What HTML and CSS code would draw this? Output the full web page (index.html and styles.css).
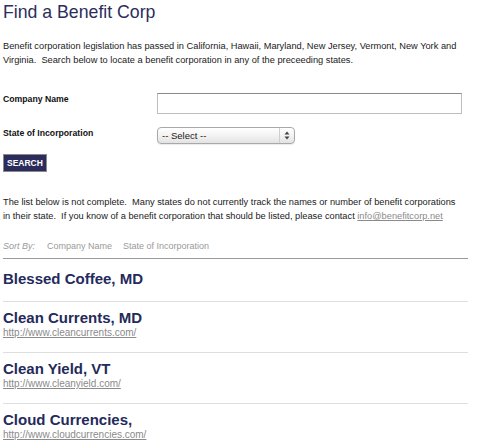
FILE: index.html
```html
<!DOCTYPE html>
<html>
<head>
<meta charset="utf-8">
<link rel="stylesheet" href="styles.css">
</head>
<body>
<div class="page">
  <h1 class="title">Find a Benefit Corp</h1>
  <p class="intro">Benefit corporation legislation has passed in California, Hawaii, Maryland, New Jersey, Vermont, New York and Virginia.&nbsp; Search below to locate a benefit corporation in any of the preceeding states.</p>

  <form class="search-form">
    <div class="form-row row-name">
      <label class="form-label">Company Name</label>
      <input class="text-input" type="text">
    </div>
    <div class="form-row row-state">
      <label class="form-label">State of Incorporation</label>
      <div class="select-box">
        <span class="select-text">-- Select --</span>
        <span class="select-arrows">
          <svg width="6" height="9" viewBox="0 0 6 9"><path d="M3 0.5 L5.5 3.5 L0.5 3.5 Z" fill="#444"/><path d="M3 8.5 L5.5 5.5 L0.5 5.5 Z" fill="#444"/></svg>
        </span>
      </div>
    </div>
    <button class="search-btn" type="button">SEARCH</button>
  </form>

  <p class="notice">The list below is not complete.&nbsp; Many states do not currently track the names or number of benefit corporations in their state.&nbsp; If you know of a benefit corporation that should be listed, please contact <a class="mail-link" href="#">info@benefitcorp.net</a></p>

  <div class="sort-bar">
    <span class="sort-label">Sort By:</span>
    <span class="sort-opt">Company Name</span>
    <span class="sort-opt">State of Incorporation</span>
  </div>

  <ul class="corp-list">
    <li class="corp">
      <h2 class="corp-name">Blessed Coffee, MD</h2>
    </li>
    <li class="corp">
      <h2 class="corp-name">Clean Currents, MD</h2>
      <a class="corp-url" href="#">http://www.cleancurrents.com/</a>
    </li>
    <li class="corp">
      <h2 class="corp-name">Clean Yield, VT</h2>
      <a class="corp-url" href="#">http://www.cleanyield.com/</a>
    </li>
    <li class="corp">
      <h2 class="corp-name">Cloud Currencies,</h2>
      <a class="corp-url" href="#">http://www.cloudcurrencies.com/</a>
    </li>
  </ul>
</div>
</body>
</html>
```

FILE: styles.css
```css
html, body {
  margin: 0;
  padding: 0;
  background: #fff;
}

body {
  font-family: "Liberation Sans", Arial, Helvetica, sans-serif;
  color: #1a1a1a;
}

.page {
  width: 465px;
  padding: 0 0 0 3px;
}

.title {
  margin: 0;
  padding-top: 1px;
  font-size: 17.7px;
  line-height: 22px;
  font-weight: normal;
  color: #2b2d5c;
}

.intro {
  margin: 16px 0 0;
  font-size: 9.25px;
  line-height: 14px;
  color: #1a1a1a;
}

.search-form {
  margin: 26px 0 0;
}

.form-row {
  display: flex;
  align-items: flex-start;
}

.form-label {
  width: 154px;
  flex: none;
  font-size: 8.7px;
  line-height: 14px;
  font-weight: bold;
  color: #111;
}

.row-name .form-label {
  margin-top: -1px;
}

.text-input {
  box-sizing: border-box;
  width: 305px;
  height: 21px;
  margin: 0;
  padding: 0;
  border: 1px solid #bdbdbd;
  border-top-color: #8a8a8a;
  background: #fff;
  outline: none;
}

.row-state {
  margin-top: 12px;
}

.select-box {
  box-sizing: border-box;
  width: 138px;
  height: 17px;
  margin-top: 1px;
  display: flex;
  align-items: center;
  border: 1px solid #a9a9a9;
  border-radius: 4px;
  background: linear-gradient(#ffffff, #f4f4f4 45%, #e3e3e3);
  box-shadow: 0 1px 1px rgba(0,0,0,0.08);
}

.select-text {
  flex: 1;
  padding-left: 4px;
  font-size: 9.5px;
  line-height: 15px;
  color: #222;
}

.select-arrows {
  width: 14px;
  height: 15px;
  display: flex;
  align-items: center;
  justify-content: center;
  border-left: 1px solid #cfcfcf;
}

.search-btn {
  display: block;
  margin: 10px 0 0;
  box-sizing: border-box;
  height: 18px;
  padding: 0 3px;
  border: 1px solid #8a8a8a;
  background: #2b2c5b;
  color: #fff;
  font-family: "Liberation Sans", Arial, Helvetica, sans-serif;
  font-size: 8.5px;
  font-weight: bold;
  line-height: 16px;
}

.notice {
  margin: 23px 0 0;
  max-width: 458px;
  font-size: 9.25px;
  line-height: 14px;
  color: #1a1a1a;
}

.mail-link {
  color: #8a8a8a;
  text-decoration: underline;
}

.sort-bar {
  margin-top: 16px;
  padding-bottom: 5px;
  border-bottom: 1px solid #9a9a9a;
  display: flex;
  gap: 11px;
  font-size: 9px;
  line-height: 14px;
  color: #9a9a9a;
}

.sort-label {
  font-style: italic;
  margin-right: 1px;
}

.corp-list {
  list-style: none;
  margin: 4px 0 0;
  padding: 0;
}

.corp {
  padding: 7px 0 13px;
  border-bottom: 1px solid #dedede;
}

.corp-name {
  margin: 0;
  font-size: 15px;
  line-height: 18px;
  font-weight: bold;
  color: #242a5c;
}

.corp-url {
  display: block;
  font-size: 10px;
  line-height: 12px;
  color: #8a8a8a;
  text-decoration: underline;
}
```
